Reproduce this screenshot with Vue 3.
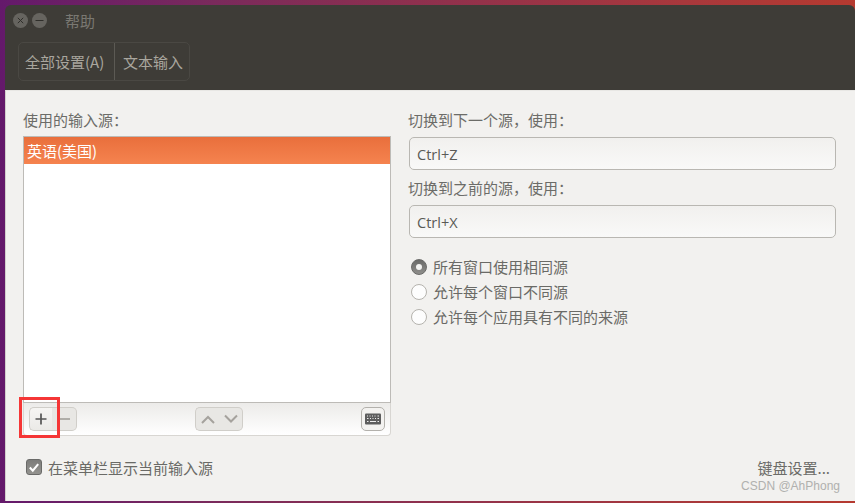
<template>
  <div class="page">
    <div class="window">
      <header class="head">
        <div class="titlebar">
          <span class="wbtn"><svg viewBox="0 0 15 15" width="15" height="15"><path d="M4.8 4.8l5.4 5.4M10.2 4.8l-5.4 5.4" stroke="#2f2e2a" stroke-width="1" fill="none"/></svg></span>
          <span class="wbtn"><svg viewBox="0 0 15 15" width="15" height="15"><path d="M3.5 7.5h8" stroke="#2f2e2a" stroke-width="1.2" fill="none"/></svg></span>
          <span class="title">帮助</span>
        </div>
        <div class="crumbs">
          <span class="crumb first">全部设置(A)</span>
          <span class="crumb">文本输入</span>
        </div>
      </header>
      <main class="body">
        <div class="columns">
          <section class="left">
            <div class="label">使用的输入源：</div>
            <div class="listframe">
              <div class="list"><div class="row">英语(美国)</div></div>
              <div class="toolbar">
                <div class="group">
                  <span class="tb plus"><svg viewBox="0 0 14 14" width="14" height="14"><path d="M7 1.5v11M1.5 7h11" stroke="#555" stroke-width="1.7" fill="none"/></svg></span>
                  <span class="tb minus"><svg viewBox="0 0 14 14" width="14" height="14"><path d="M1 7h12" stroke="#a5a29d" stroke-width="1.7" fill="none"/></svg></span>
                </div>
                <div class="group arrows">
                  <span class="tb arrow"><svg viewBox="0 0 16 12" width="16" height="12"><path d="M2 10l6-6 6 6" stroke="#a5a29d" stroke-width="2" fill="none"/></svg></span>
                  <span class="tb arrow"><svg viewBox="0 0 16 12" width="16" height="12"><path d="M2 2.5l6 6 6-6" stroke="#a5a29d" stroke-width="2" fill="none"/></svg></span>
                </div>
                <span class="tb kbd">
                  <svg viewBox="0 0 16 12" width="16" height="12">
                    <rect x="0" y="0.5" width="16" height="11" rx="1" fill="#5d5d5d"/>
                    <path d="M2 3h1M4.500 3h1M7 3h1M9.500 3h1M12.500 3h1.500M2 5.500h1.500M5 5.500h1M7.500 5.500h1M10 5.500h1M12.500 5.500h1.500M2 8.500h1.500M5 8.500h6M12.500 8.500h1.500" stroke="#eee" stroke-width="1" fill="none"/>
                  </svg>
                </span>
              </div>
            </div>
          </section>
          <section class="right">
            <div class="label">切换到下一个源，使用：</div>
            <div class="entry">Ctrl+Z</div>
            <div class="label second">切换到之前的源，使用：</div>
            <div class="entry">Ctrl+X</div>
            <div class="radios">
              <div v-for="(r, i) in radios" :key="r" class="radio-row">
                <span class="radio" :class="{ on: i === 0 }"></span>{{ r }}
              </div>
            </div>
          </section>
        </div>
        <footer class="foot">
          <div class="check-row">
            <span class="check"><svg viewBox="0 0 15 15" width="15" height="15"><path d="M3 7.500l3.200 3.500L12 3.800" stroke="#fff" stroke-width="2.200" fill="none"/></svg></span>
            在菜单栏显示当前输入源
          </div>
          <div class="kb-link">键盘设置...</div>
        </footer>
        <div class="mark">CSDN @AhPhong</div>
      </main>
    </div>
    <div class="redbox"></div>
  </div>
</template>

<script setup>
const radios = ['所有窗口使用相同源', '允许每个窗口不同源', '允许每个应用具有不同的来源']
</script>

<style>
html, body { margin: 0; padding: 0; }
</style>

<style scoped>
.page {
  position: relative;
  width: 855px;
  height: 503px;
  overflow: hidden;
  box-sizing: border-box;
  padding: 5px 0 2px 5px;
  background: linear-gradient(90deg, #64196b 0%, #7a2a5c 25%, #a8383c 80%, #b53a30 100%);
  font-family: "Noto Sans CJK SC", "Noto Sans", sans-serif;
  font-size: 15px;
  color: #6a6a66;
}
.window {
  height: 100%;
  display: flex;
  flex-direction: column;
  border-radius: 6px 6px 0 0;
  overflow: hidden;
}
.head {
  height: 85px;
  flex: none;
  background: #3e3c37;
  box-sizing: border-box;
  padding: 8px 0 0 8px;
}
.titlebar {
  display: flex;
  align-items: center;
  height: 15px;
  gap: 4px;
}
.wbtn {
  width: 15px;
  height: 15px;
  border-radius: 50%;
  background: #66645f;
  display: flex;
}
.title {
  margin-left: 14px;
  color: #7a7872;
  line-height: 15px;
}
.crumbs {
  display: flex;
  width: 172px;
  height: 39px;
  margin: 14px 0 0 5px;
  border: 1px solid #4a4843;
  border-radius: 5px;
  box-sizing: border-box;
  color: #a9a69e;
}
.crumb {
  display: flex;
  align-items: center;
  padding-left: 8px;
  flex: 1;
  white-space: nowrap;
}
.crumb.first {
  flex: none;
  width: 96px;
  padding-left: 6px;
  box-sizing: border-box;
  border-right: 1px solid #5c5a54;
}
.body {
  position: relative;
  flex: 1;
  display: flex;
  flex-direction: column;
  background: #f2f1ef;
  border-left: 1px solid #d2d0cc;
  border-top: 1px solid #e8e7e4;
  box-sizing: border-box;
  padding: 19px 19px 0 17px;
}
.columns {
  display: flex;
  gap: 17px;
}
.left { width: 368px; flex: none; }
.right { flex: 1; }
.label {
  height: 20px;
  line-height: 20px;
  white-space: nowrap;
  color: #6c6c68;
}
.listframe { margin-top: 6px; }
.list {
  height: 267px;
  box-sizing: border-box;
  background: #fff;
  border: 1px solid #bdbbb7;
}
.row {
  height: 27px;
  line-height: 27px;
  padding-left: 3px;
  color: #fff;
  background: linear-gradient(#e96f3c, #f5834f);
}
.toolbar {
  position: relative;
  height: 33px;
  box-sizing: border-box;
  border: 1px solid #d8d6d2;
  border-top: none;
  border-radius: 0 0 4px 4px;
  background: linear-gradient(#ecebe9, #ffffff);
  display: flex;
  align-items: center;
  justify-content: space-between;
  padding: 0 5px;
}
.group { display: flex; }
.tb {
  height: 24px;
  box-sizing: border-box;
  display: flex;
  align-items: center;
  justify-content: center;
  border: 1px solid #d0cec9;
  background: #e8e7e4;
}
.plus {
  width: 23px;
  border-radius: 5px 0 0 5px;
  background: linear-gradient(#f6f5f3, #ebeae7);
  border-right: none;
}
.minus {
  width: 25px;
  border-radius: 0 5px 5px 0;
  border-left: none;
}
.arrows { position: absolute; left: 171px; top: 4px; }
.arrow { width: 24px; border-radius: 5px 0 0 5px; border-right: none; }
.arrow + .arrow { border-radius: 0 5px 5px 0; border-right: 1px solid #d0cec9; border-left: none; }
.kbd {
  width: 24px;
  border-radius: 5px;
  background: #f3f2f0;
  border-color: #b3b1ac;
}
.entry {
  height: 33px;
  line-height: 33px;
  margin: 7px 0 0 1px;
  box-sizing: border-box;
  border: 1px solid #b9b7b2;
  border-radius: 5px;
  background: linear-gradient(#f1f0ee, #f9f9f8);
  padding-left: 7px;
  font-family: "Open Sans", "Noto Sans", sans-serif;
  font-size: 14.5px;
  color: #5a5a56;
}
.second { margin-top: 8px; }
.radios { margin-top: 16px; }
.radio-row {
  height: 25px;
  display: flex;
  align-items: center;
  gap: 6px;
  padding-left: 3px;
  white-space: nowrap;
}
.radio {
  width: 16px;
  height: 16px;
  box-sizing: border-box;
  border-radius: 50%;
  border: 1px solid #b5b3ae;
  background: #fdfdfd;
  position: relative;
}
.radio.on {
  background: linear-gradient(#6a6a68, #8f8e8b);
  border-color: #6a6a68;
}
.radio.on::after {
  content: "";
  position: absolute;
  left: 4px;
  top: 4px;
  width: 6px;
  height: 6px;
  border-radius: 50%;
  background: #f4f4f2;
}
.foot {
  display: flex;
  justify-content: space-between;
  align-items: center;
  margin-top: 21px;
  height: 20px;
  margin-right: 6px;
  padding-left: 3px;
}
.check-row {
  display: flex;
  align-items: center;
  gap: 6px;
}
.check {
  width: 16px;
  height: 16px;
  box-sizing: border-box;
  border-radius: 3px;
  border: 1px solid #6a6a68;
  background: linear-gradient(#7d7d7b, #94938f);
  display: flex;
  align-items: center;
  justify-content: center;
}
.kb-link { color: #6c6c68; }
.mark {
  position: absolute;
  right: 15px;
  bottom: 8px;
  font-family: "Liberation Sans", sans-serif;
  font-size: 12px;
  color: #b0b0ae;
}
.redbox {
  position: absolute;
  left: 19px;
  top: 397px;
  width: 41px;
  height: 41px;
  box-sizing: border-box;
  border: 3px solid #f53636;
}
</style>
